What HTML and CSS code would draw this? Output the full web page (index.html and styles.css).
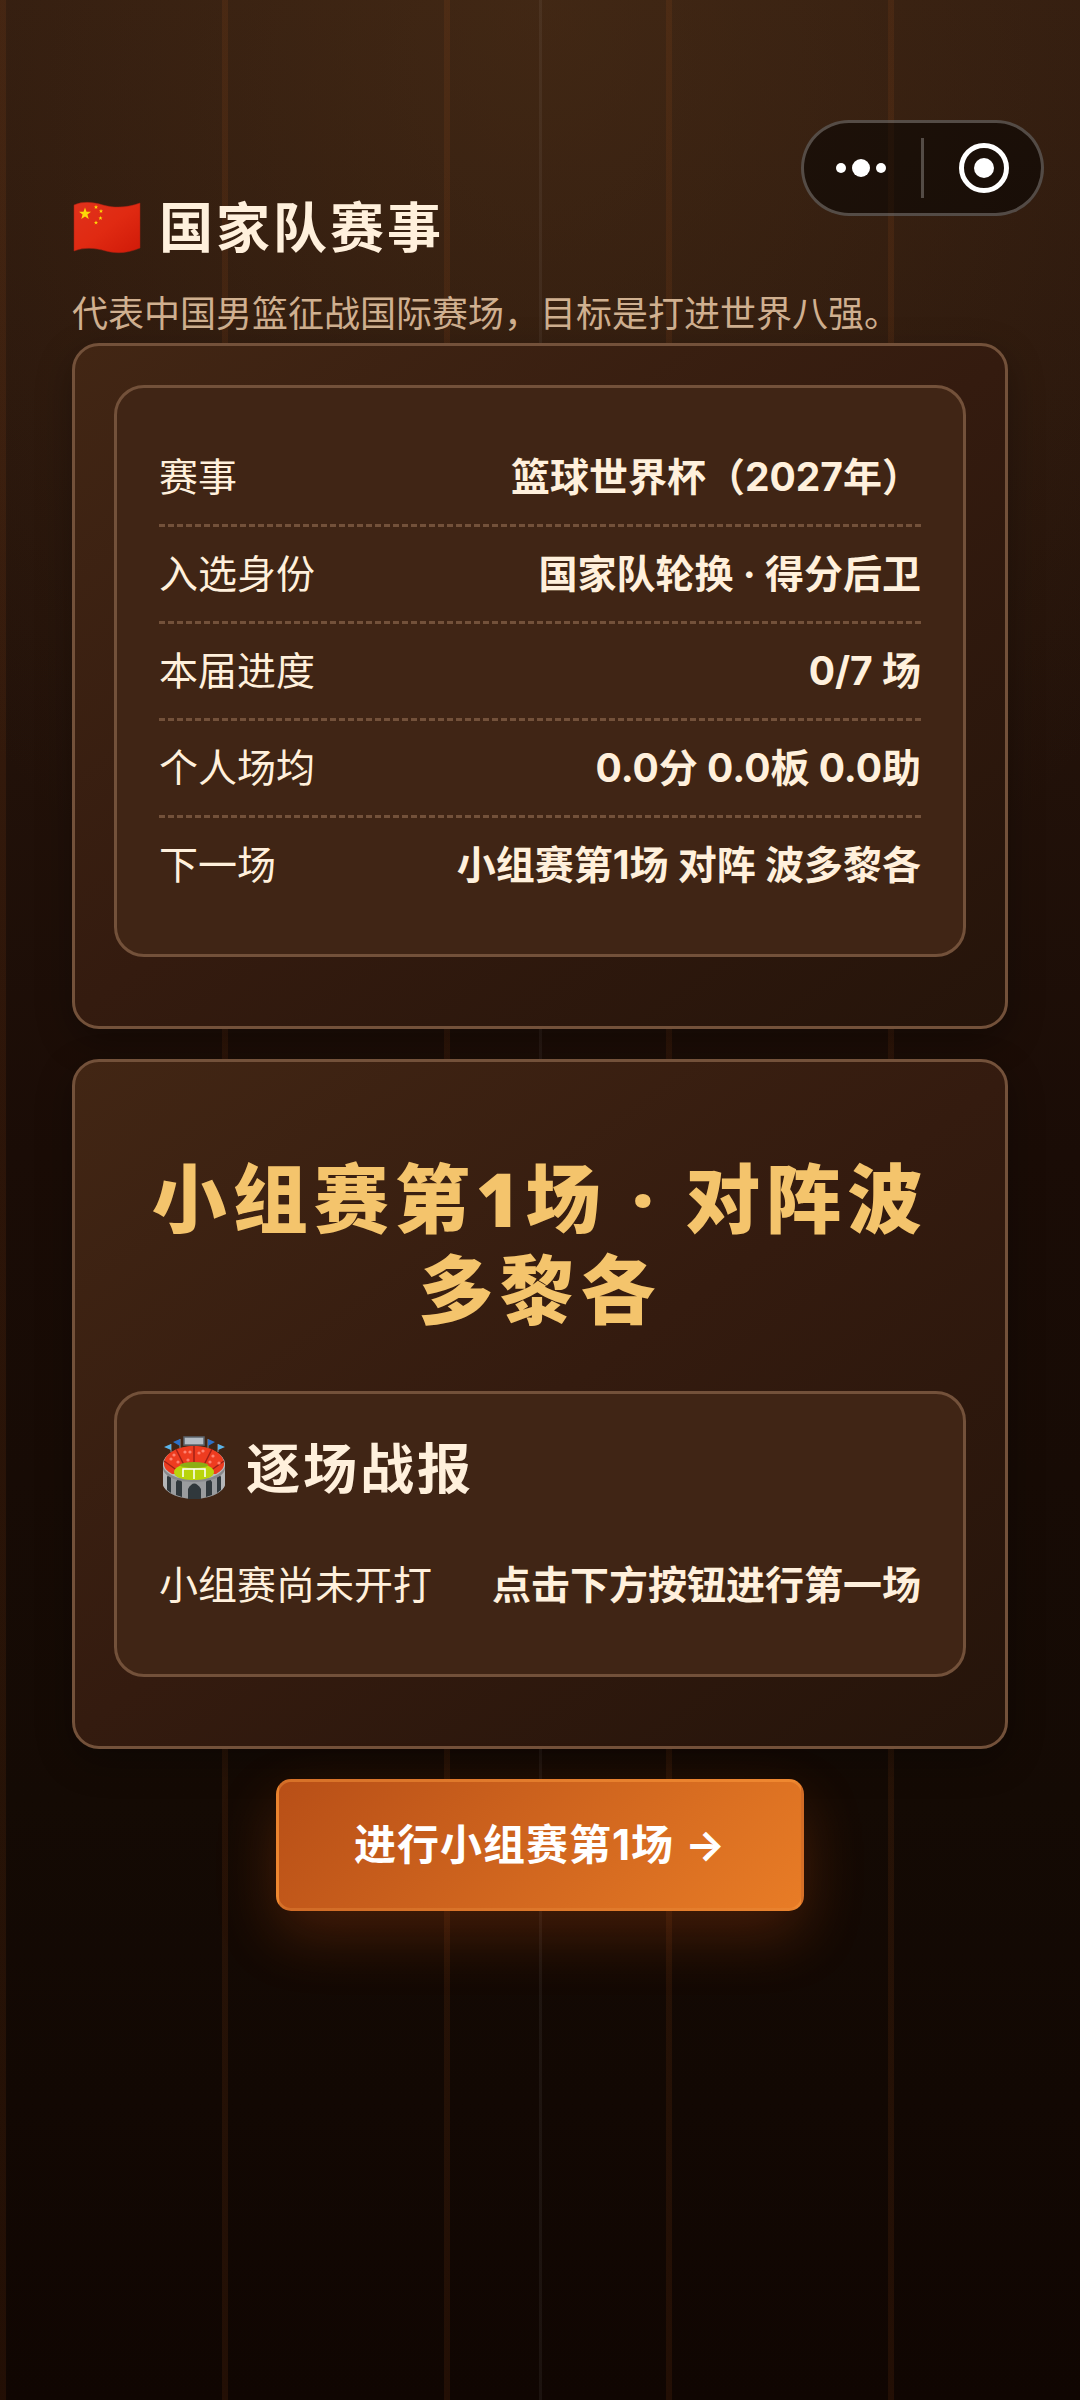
FILE: index.html
```html
<!DOCTYPE html>
<html lang="zh-CN">
<head>
<meta charset="utf-8">
<meta name="viewport" content="width=device-width, initial-scale=1">
<title>国家队赛事</title>
<link rel="stylesheet" href="styles.css">
</head>
<body>
<div class="page">
  <nav class="capsule" aria-label="小程序菜单">
    <button class="capsule-btn capsule-more" type="button" aria-label="更多">
      <svg width="50" height="18" viewBox="0 0 50 18"><g fill="#fff"><circle cx="5" cy="9" r="5"/><circle cx="25" cy="9" r="9"/><circle cx="45" cy="9" r="5"/></g></svg>
    </button>
    <button class="capsule-btn capsule-close" type="button" aria-label="关闭">
      <svg width="50" height="50" viewBox="0 0 50 50"><circle cx="25" cy="25" r="22.5" fill="none" stroke="#fff" stroke-width="5"/><circle cx="25" cy="25" r="10" fill="#fff"/></svg>
    </button>
  </nav>

  <main class="content">
    <header class="header">
      <h1 class="title">
        <svg class="emoji" viewBox="-1 0 68 68" role="img" aria-label="中国国旗">
          <defs><linearGradient id="flag" x1="0" y1="0" x2="1" y2="1"><stop offset="0" stop-color="#e0321c"/><stop offset=".5" stop-color="#e02a12"/><stop offset="1" stop-color="#d01a08"/></linearGradient></defs>
          <path d="M1 12C10 8 20 9 30 12S54 15 67 10V55C55 60 44 61 33 58S12 54 1 58Z" fill="url(#flag)" stroke="#a82012" stroke-opacity=".5"/>
          <g fill="#fcd808"><path d="M12 14.500l1.500 4.200 4.500.1-3.600 2.700 1.300 4.500-3.700-2.600-3.700 2.600 1.300-4.500L6 18.800l4.500-.1z"/><path id="s" d="M23 12l.6 1.400 1.400.1-1.100 1 .4 1.400-1.300-.8-1.300.8.4-1.400-1.100-1 1.400-.1z"/><use href="#s" x="5" y="4"/><use href="#s" x="4.500" y="11"/><use href="#s" y="15.500"/></g>
        </svg>
        <span>国家队赛事</span>
      </h1>
      <p class="subtitle">代表中国男篮征战国际赛场，目标是打进世界八强。</p>
    </header>

    <section class="card">
      <dl class="panel rows">
        <div class="row"><dt>赛事</dt><dd>篮球世界杯（2027年）</dd></div>
        <div class="row"><dt>入选身份</dt><dd>国家队轮换 · 得分后卫</dd></div>
        <div class="row"><dt>本届进度</dt><dd>0/7 场</dd></div>
        <div class="row"><dt>个人场均</dt><dd>0.0分 0.0板 0.0助</dd></div>
        <div class="row"><dt>下一场</dt><dd>小组赛第1场 对阵 波多黎各</dd></div>
      </dl>
    </section>

    <section class="card">
      <h2 class="match">小组赛第1场 · 对阵波多黎各</h2>
      <div class="panel">
        <h3 class="title title-report">
          <svg class="emoji" viewBox="-1 0 68 68" role="img" aria-label="体育场">
            <path d="M3 28v22c3 9 18 14 31 14s28-5 31-14V28z" fill="#9a9c9e"/>
            <path d="M3 28v22c1 3 4 6 8 8V30zM65 28v22c-1 3-4 6-8 8V30z" fill="#b4b6b8"/>
            <g fill="#30383c"><path d="M28 64V54q6-11 13 0v10z"/><path d="M16 60V47q3-6 6 0v15zM46 62V47q3-6 6 0v13zM7 55V42q2-5 4 0v16zM57 58V42q2-5 4 0v13z"/></g>
            <ellipse cx="34" cy="29" rx="31" ry="17" fill="#b8babc"/>
            <path d="M4 29C4 18 18 11 34 11s30 7 30 18c0 4-3 7-8 10L12 39c-5-3-8-6-8-10z" fill="#ee3c20"/>
            <path d="M34 11v20M16 14l9 18M52 14l-9 18M4 26l14 10M64 26L50 36" stroke="#a32016" stroke-width="1.500"/>
            <g fill="#ff8270"><circle cx="25" cy="17" r="1.600"/><circle cx="30" cy="17" r="1.600"/><circle cx="28" cy="25" r="1.600"/><circle cx="39" cy="18" r="1.600"/><circle cx="43" cy="16" r="1.600"/><circle cx="11" cy="24" r="1.600"/><circle cx="14" cy="20" r="1.600"/><circle cx="18" cy="27" r="1.600"/><circle cx="53" cy="21" r="1.600"/><circle cx="50" cy="27" r="1.600"/><circle cx="59" cy="28" r="1.600"/></g>
            <ellipse cx="34" cy="37" rx="20" ry="9" fill="#b9d40c"/>
            <ellipse cx="34" cy="30" rx="14" ry="3" fill="#8cae14"/>
            <path d="M23 42V34h22v8M34 34v10" fill="none" stroke="#fff" stroke-width="1.500"/>
            <path d="M3 31c2 8 16 14 31 14s29-6 31-14v3c-2 9-16 13-31 13S5 43 3 34z" fill="#87898c"/>
            <path d="M24 2h20v8H24z" fill="#b4bcc4" stroke="#5c646c" stroke-width="1.500"/>
            <path d="M20 4v9M48 4v9M11 9v8M58 9v8" stroke="#8e9499" stroke-width="1"/>
            <path d="M20 4v7l-7-4zM48 4v7l7-4z" fill="#2d70c8"/><path d="M11 9v6l-7-3zM58 9v6l7-3z" fill="#5cb4e8"/>
          </svg>
          <span>逐场战报</span>
        </h3>
        <div class="row"><span>小组赛尚未开打</span><strong>点击下方按钮进行第一场</strong></div>
      </div>
    </section>

    <button class="play" type="button">进行小组赛第1场 →</button>
  </main>
</div>
</body>
</html>
```
FILE: styles.css
```css
:root {
  --cream: #fff0dc;
  --gold: #f4c46c;
  --line: #73513a;
}

* { box-sizing: border-box; }

body {
  margin: 0;
  color: var(--cream);
  background: #100602;
  font-family: Inter, "Noto Sans CJK SC", sans-serif;
  font-size: 39px;
}

h1, h2, h3, p, dl, dd { margin: 0; }

h1, h2, h3 { font-family: "Noto Sans", "Noto Sans CJK SC", sans-serif; }

button {
  border: 0;
  color: #fff;
  font-family: inherit;
  cursor: pointer;
}

/* court floor: plank lines, centre line, warm light from above */
.page {
  position: relative;
  min-height: 100vh;
  padding: 184px 72px 72px;
  background:
    linear-gradient(rgba(255, 255, 255, .05), rgba(255, 255, 255, .05)) center / 3px 100% no-repeat,
    repeating-linear-gradient(90deg, rgba(200, 95, 30, .1) 0 6px, transparent 6px 222px),
    radial-gradient(ellipse 76% 42% at 50% 0, rgba(96, 62, 30, .36), transparent),
    linear-gradient(#301b0f, #1a0c06 48%, #140a04 75%, #100602);
}

.capsule {
  position: absolute;
  top: 120px;
  right: 36px;
  display: flex;
  align-items: center;
  width: 243px;
  height: 96px;
  border: 3px solid rgba(255, 255, 255, .25);
  border-radius: 48px;
  background: rgba(0, 0, 0, .5);
}

.capsule-btn {
  display: flex;
  flex: 1;
  align-items: center;
  justify-content: center;
  height: 60px;
  padding: 0;
  background: none;
}

.capsule-more { padding-right: 3px; }

.capsule-close {
  padding-left: 3px;
  border-left: 3px solid rgba(255, 255, 255, .25);
}

.content {
  display: flex;
  flex-direction: column;
  gap: 30px;
}

.header {
  display: flex;
  flex-direction: column;
  gap: 15px;
  margin-bottom: -30px;
}

.title {
  display: flex;
  align-items: center;
  gap: 19px;
  font-size: 54px;
  font-weight: 700;
  line-height: 86px;
  letter-spacing: 3px;
}

.title-report {
  height: 65px;
  margin-bottom: 37px;
  line-height: 65px;
}

.emoji {
  flex: none;
  width: 68px;
  height: 68px;
  overflow: visible;
}

.subtitle {
  color: #d0b090;
  font-size: 36px;
  line-height: 58px;
}

.card {
  padding: 39px 39px 69px;
  border: 3px solid var(--line);
  border-radius: 27px;
  background: linear-gradient(145deg, #422614, #341b0f 50%, #25140a);
  box-shadow: 0 12px 36px rgba(0, 0, 0, .3);
}

.panel {
  padding: 42px;
  border: 3px solid var(--line);
  border-radius: 30px;
  background: #402515;
}

.row {
  display: flex;
  justify-content: space-between;
  gap: 24px;
  padding: 18px 0;
  line-height: 58px;
}

.rows .row:not(:last-child) { border-bottom: 3px dashed var(--line); }

.row dd, .row strong {
  font-weight: 700;
  text-align: right;
}

.match {
  margin: 52px 0 56px;
  padding: 0 24px;
  color: var(--gold);
  font-size: 75px;
  font-weight: 900;
  line-height: 91px;
  letter-spacing: 6px;
  text-align: center;
}

.play {
  align-self: center;
  min-width: 528px;
  padding: 36px 60px;
  border: 3px solid rgba(255, 160, 70, .35);
  border-radius: 15px;
  background: linear-gradient(135deg, #b84f17, #e87c26);
  box-shadow: 0 24px 60px rgba(232, 93, 20, .24);
  font-size: 42px;
  font-weight: 700;
  line-height: 54px;
  letter-spacing: 1px;
}
```
